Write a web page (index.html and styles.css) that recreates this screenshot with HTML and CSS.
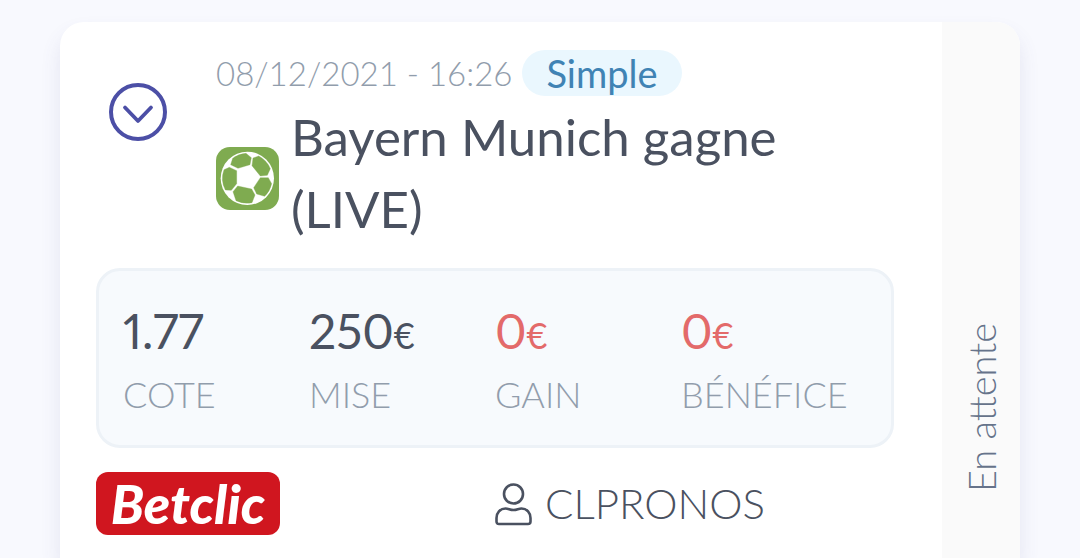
FILE: index.html
```html
<!DOCTYPE html>
<html lang="fr">
<head>
<meta charset="utf-8">
<meta name="viewport" content="width=device-width, initial-scale=1">
<title>Bayern Munich gagne (LIVE)</title>
<link rel="stylesheet" href="styles.css">
</head>
<body>
<main class="page">
  <article class="card">
    <div class="content">
      <header class="header">
        <button class="toggle" type="button" aria-label="Afficher les détails">
          <svg viewBox="0 0 58 58" fill="none" stroke="#4c4fa6" stroke-linecap="round" stroke-linejoin="round">
            <circle cx="29" cy="29" r="27" stroke-width="4"/>
            <path d="M16 24.500L29 38L42 24.500" stroke-width="3.800"/>
          </svg>
        </button>
        <div class="bet">
          <div class="meta">
            <time datetime="2021-12-08T16:26">08/12/2021 - 16:26</time>
            <span class="tag">Simple</span>
          </div>
          <div class="event">
            <svg class="sport" viewBox="0 0 189 189" role="img" aria-label="Football">
              <rect width="189" height="189" rx="42" fill="#7fab50"/>
              <circle cx="94" cy="94" r="80" fill="#fff"/>
              <g fill="#7fab50" stroke="#7fab50" stroke-linejoin="round">
                <path d="M66 64L44 53L50 34A75 75 0 0 1 90 19L106 32L102 53Z"/>
                <path d="M111 33L128 27A75 75 0 0 1 163 65L154 85L133 87L108 56Z"/>
                <path d="M133 92L157 92L167 110A75 75 0 0 1 146 148L122 141L113 122Z"/>
                <path d="M65 117L107 126L117 144L108 167A75 75 0 0 1 60 161L51 134Z"/>
                <path d="M40 61L62 71V110L46 130L28 129A75 75 0 0 1 24 68Z"/>
              </g>
            </svg>
            <h1 class="title">Bayern Munich gagne (LIVE)</h1>
          </div>
        </div>
      </header>
      <dl class="stats">
        <div class="stat"><dt>COTE</dt><dd>1.77</dd></div>
        <div class="stat"><dt>MISE</dt><dd>250<small>€</small></dd></div>
        <div class="stat loss"><dt>GAIN</dt><dd>0<small>€</small></dd></div>
        <div class="stat loss"><dt>BÉNÉFICE</dt><dd>0<small>€</small></dd></div>
      </dl>
      <footer class="footer">
        <div><span class="bookmaker">Betclic</span></div>
        <div class="user">
          <svg viewBox="0 0 38 44" fill="none" stroke="#4a5160" stroke-width="2.600" stroke-linejoin="round" aria-hidden="true">
            <circle cx="18.500" cy="12" r="9.500"/>
            <path d="M10.500 26.500C13.500 26.500 15 28 18.500 28C22 28 23.500 26.500 26.500 26.500C32 26.500 35.500 31 35.500 36V39.500Q35.500 42 33 42H4Q1.500 42 1.500 39.500V36C1.500 31 5 26.500 10.500 26.500Z"/>
          </svg>
          <span>CLPRONOS</span>
        </div>
      </footer>
    </div>
    <aside class="status"><span>En attente</span></aside>
  </article>
</main>
</body>
</html>
```
FILE: styles.css
```css
* { box-sizing: border-box; }

body {
  margin: 0;
  background: #f8f9fe;
  color: #4a5160;
  font-family: Lato, "Open Sans", sans-serif;
}

.page {
  display: flex;
  min-height: 100vh;
  padding: 22px 60px 0;
}

.card {
  display: flex;
  flex: 1;
  min-width: 0;
  overflow: hidden;
  background: #fff;
  border-radius: 24px 24px 0 0;
  box-shadow: 0 12px 20px rgba(80, 80, 150, 0.12);
}

.content {
  flex: 1;
  min-width: 0;
  padding: 26px 48px 23px 36px;
}

.header {
  display: grid;
  grid-template-columns: 108px 1fr;
  padding-left: 12px;
}

.toggle {
  width: 60px;
  height: 60px;
  margin-top: 34px;
  padding: 0 1px;
  border: 0;
  background: none;
}

.toggle svg {
  display: block;
  width: 58px;
  height: 58px;
}

.meta {
  display: flex;
  align-items: center;
  gap: 10px;
  height: 50px;
  color: #919dac;
  font-size: 33px;
  font-weight: 300;
}

.tag {
  padding: 0 24px;
  border-radius: 24px;
  background: #eaf7fe;
  color: #4083b4;
  font-size: 38px;
  font-weight: 400;
  line-height: 46px;
}

.event {
  display: flex;
  align-items: center;
  gap: 12px;
  padding-top: 3px;
}

.sport {
  flex: none;
  width: 63px;
  height: 63px;
  margin-top: 10px;
}

.title {
  max-width: 540px;
  margin: 0;
  font-size: 51px;
  font-weight: 400;
  line-height: 72px;
}

.stats {
  display: grid;
  grid-template-columns: repeat(4, 1fr);
  margin: 23px 0 24px;
  padding: 24px;
  border: 3px solid #edf2f7;
  border-radius: 24px;
  background: #f7fafd;
}

.stat {
  display: flex;
  flex-direction: column-reverse;
}

.stat dt {
  color: #919dac;
  font-size: 36px;
  font-weight: 300;
  line-height: 54px;
}

.stat dd {
  margin: 0;
  font-size: 48px;
  font-variant-numeric: proportional-nums;
  line-height: 72px;
}

.stat small {
  font-size: 36px;
  font-variant-numeric: tabular-nums;
  line-height: 1;
}

.loss dd {
  color: #e36a6a;
}

.footer {
  display: grid;
  grid-template-columns: 1fr 1fr;
  align-items: center;
}

.bookmaker {
  display: inline-block;
  width: 184px;
  border-radius: 12px;
  background: #d0161f;
  color: #fff;
  font-size: 54px;
  font-style: italic;
  font-weight: 900;
  line-height: 63px;
  text-align: center;
  vertical-align: top;
}

.user {
  display: flex;
  align-items: center;
  gap: 12px;
  font-size: 42px;
  font-weight: 300;
  line-height: 63px;
}

.user svg {
  width: 38px;
  height: 44px;
}

.status {
  display: flex;
  align-items: center;
  justify-content: flex-end;
  width: 78px;
  padding-bottom: 66px;
  background: #fafafa;
  color: #66738a;
  font-size: 38px;
  font-weight: 300;
  line-height: 78px;
  writing-mode: vertical-rl;
}

.status span {
  transform: rotate(180deg);
}
```
